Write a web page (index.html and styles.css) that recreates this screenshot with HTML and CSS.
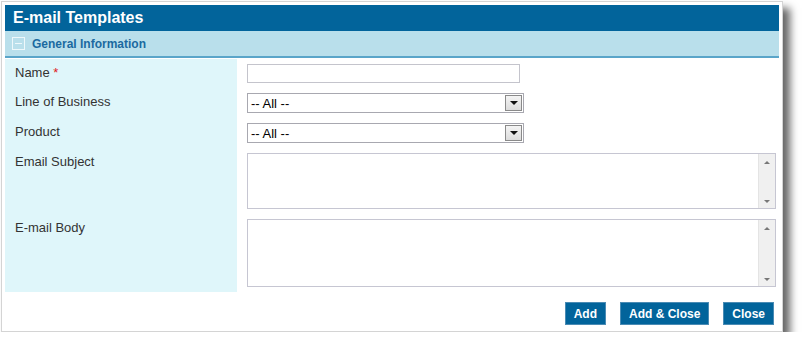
FILE: index.html
```html
<!DOCTYPE html>
<html lang="en">
<head>
  <meta charset="UTF-8">
  <title>E-mail Templates</title>
  <link rel="stylesheet" href="styles.css">
</head>
<body>
  <div class="window">
    <div class="title">E-mail Templates</div>
    <div class="section">
      <span class="toggle"></span>
      General Information
    </div>

    <div class="form">
      <div class="label">Name <span class="req">*</span></div>
      <div class="field"><input type="text" class="text"></div>

      <div class="label">Line of Business</div>
      <div class="field">
        <div class="select">-- All --<span class="arrow"></span></div>
      </div>

      <div class="label">Product</div>
      <div class="field">
        <div class="select">-- All --<span class="arrow"></span></div>
      </div>

      <div class="label">Email Subject</div>
      <div class="field">
        <div class="memo subject"><div class="scroll"><span class="up"></span><span class="down"></span></div></div>
      </div>

      <div class="label">E-mail Body</div>
      <div class="field">
        <div class="memo body"><div class="scroll"><span class="up"></span><span class="down"></span></div></div>
      </div>
    </div>

    <div class="buttons">
      <button class="btn">Add</button>
      <button class="btn">Add &amp; Close</button>
      <button class="btn">Close</button>
    </div>
  </div>
</body>
</html>
```

FILE: styles.css
```css
body {
  margin: 0;
  background: #fff;
  font-family: Arial, "Liberation Sans", sans-serif;
}
.window {
  margin: 1px 0 0 1px;
  width: 774px;
  border: 1px solid #d4d4d4;
  padding: 3px;
  background: #fff;
  box-shadow: 7px 7px 8px rgba(0, 0, 0, 0.6);
}
.title {
  height: 26px;
  line-height: 26px;
  padding-left: 8px;
  background: #02649b;
  color: #fff;
  font-size: 16px;
  font-weight: bold;
}
.section {
  display: flex;
  align-items: center;
  height: 25px;
  padding-left: 7px;
  background: #b9dfeb;
  border-bottom: 2px solid #5aa5c9;
  color: #1b6aa0;
  font-size: 12px;
  font-weight: bold;
  margin-bottom: 1px;
}
.toggle {
  position: relative;
  width: 11px;
  height: 11px;
  border: 1px solid #eef8fb;
  margin-right: 7px;
}
.toggle::after {
  content: "";
  position: absolute;
  left: 2px;
  right: 2px;
  top: 5px;
  height: 1px;
  background: #eef8fb;
}
.form {
  display: grid;
  grid-template-columns: 232px 1fr;
}
.label {
  background: #dff6fa;
  padding: 6px 0 0 10px;
  font-size: 13px;
  color: #333;
  line-height: 15px;
}
.req {
  color: #e02020;
}
.field {
  padding: 5px 3px 5px 10px;
}
.text {
  display: block;
  box-sizing: border-box;
  width: 273px;
  height: 19px;
  margin: 0;
  border: 1px solid #c4c4cc;
  background: #fff;
}
.select {
  display: flex;
  align-items: center;
  justify-content: space-between;
  box-sizing: border-box;
  width: 277px;
  height: 20px;
  padding: 0 1px 0 3px;
  border: 1px solid #a8a8b0;
  font-size: 13px;
  color: #000;
}
.arrow {
  position: relative;
  box-sizing: border-box;
  width: 17px;
  height: 16px;
  border: 1px solid #8a8a8a;
  background: linear-gradient(#f4f4f4, #dcdcdc);
}
.arrow::after {
  content: "";
  position: absolute;
  left: 4px;
  top: 5px;
  border-left: 4px solid transparent;
  border-right: 4px solid transparent;
  border-top: 4px solid #111;
}
.memo {
  display: flex;
  justify-content: flex-end;
  box-sizing: border-box;
  width: 529px;
  border: 1px solid #c6c6d2;
  background: #fff;
}
.subject {
  height: 56px;
}
.body {
  height: 68px;
}
.scroll {
  display: flex;
  flex-direction: column;
  justify-content: space-between;
  align-items: center;
  width: 16px;
  padding: 7px 0 5px;
  background: #f0f0f0;
  border-left: 1px solid #e4e4e4;
}
.up,
.down {
  width: 0;
  height: 0;
  border-left: 3px solid transparent;
  border-right: 3px solid transparent;
}
.up {
  border-bottom: 3px solid #777;
}
.down {
  border-top: 3px solid #777;
}
.buttons {
  display: flex;
  justify-content: flex-end;
  gap: 14px;
  padding: 10px 5px 3px;
  height: 23px;
}
.btn {
  height: 23px;
  margin: 0;
  padding: 0 8px;
  border: 1px solid #4a8bb4;
  background: #02649b;
  color: #fff;
  font-family: Arial, "Liberation Sans", sans-serif;
  font-size: 12px;
  font-weight: bold;
}
```
